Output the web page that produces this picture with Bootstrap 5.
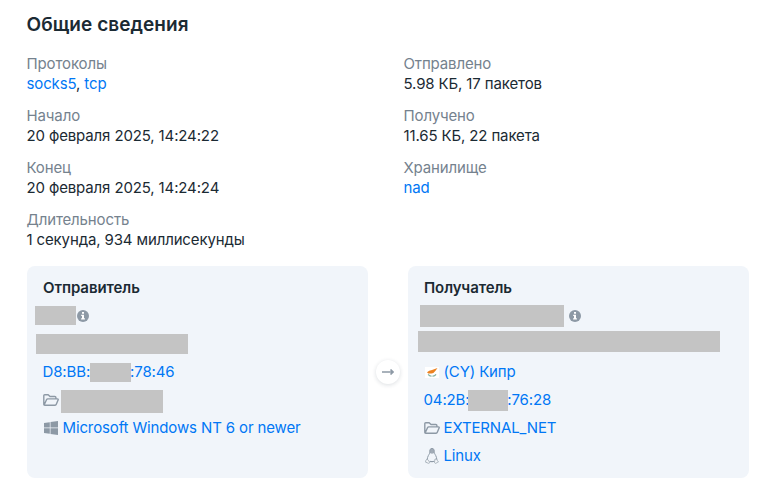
<!DOCTYPE html>
<html lang="ru">
<head>
<meta charset="utf-8">
<meta name="viewport" content="width=device-width, initial-scale=1">
<title>Общие сведения</title>
<link href="https://cdn.jsdelivr.net/npm/bootstrap@5.3.0/dist/css/bootstrap.min.css" rel="stylesheet">
<style>
body{font-family:Inter,"Liberation Sans",sans-serif;font-size:15px;line-height:20px;letter-spacing:-.13px;color:#1b2a33;background:#fff;overflow:hidden}
a{color:#0077f5;text-decoration:none}
.session{padding:13px 14px 0 27px}
.session h1{font-size:19px;line-height:24px;letter-spacing:.06px;margin:0 0 17px -.5px}
.facts{display:grid;grid-template-columns:377px 1fr;margin-bottom:16px}
.facts dl{display:grid;gap:12px;align-content:start;margin-left:-.5px}
.facts dt{color:#75828e}
.facts dt,.facts dd,.line a{font-weight:375}
.endpoint{width:341px;height:212px;background:#f1f5fa;border-radius:8px;padding:12px 16px;gap:8px}
.endpoint h2{font-size:15px;line-height:20px;letter-spacing:-.08px}
.line{height:20px;white-space:nowrap}
.line svg{flex:none}
.line a{margin-left:-.5px}
.mask{background:#c4c4c4;flex:none}
.mask-src-ip{width:41px;height:19px;margin-left:-8px}
.mask-src-host{width:152px;height:20px;margin-left:-7px}
.mask-src-mac{width:41px;height:19px;margin:1px 0 0 -.5px}
.mask-src-group{width:102px;height:23px;margin-left:2px}
.mask-dst-ip{width:144px;height:22px;margin:-1px 0 0 -4px}
.mask-dst-host{width:302px;height:21px;margin:-3px 0 0 -6px}
.mask-dst-mac{width:40px;height:21px;margin:0 -.7px 0 -1px}
.direction{width:24px;height:24px;box-shadow:0 1px 4px rgba(30,50,70,.16)}
.ico{color:#8d99a5}
.ico-info{margin:4px 0 0 1px}
.mask-dst-ip + .ico-info{margin-left:5px}
.ico-folder{margin:2px 0 0}
.ico-folder + a{margin-left:3.5px}
.ico-os{margin:3px 5px 0 1px}
.ico-tux{margin:2px 5px 0 1px}
.ico-flag{margin:5px 5px 0 1px}
</style>
<script src="https://cdn.jsdelivr.net/npm/bootstrap@5.3.0/dist/js/bootstrap.bundle.min.js"></script>
</head>
<body>
<svg class="d-none" aria-hidden="true">
<symbol id="info" viewBox="0 0 12 12"><circle cx="6" cy="6" r="6" fill="currentColor"/><path d="M5 2h2v1.700H5zM4.200 4.800H7v3.500h.9v1.200H4.100V8.300H5V6h-.8z" fill="#fff"/></symbol>
<symbol id="folder" viewBox="0 0 16 16"><path d="M.8 12.200V3.500Q.8 2.700 1.700 2.700h3.500l1.800 1.800h4.800q1.100 0 1.100 1.100v1.200M1.100 13 3.500 7.700q.4-.8 1.200-.8h9.700q1.100 0 .7 1l-1.800 4.400q-.3.900-1.200.9H1.800Q.8 13.200.8 12.200" fill="none" stroke="currentColor" stroke-width="1.400" stroke-linejoin="round"/></symbol>
<symbol id="windows" viewBox="0 0 14 14"><path d="M0 2 5.800 1.200v5.400H0zM6.500 1.100 14 0v6.600H6.500zM0 7.300h5.800v5.500L0 12zM6.500 7.300H14V14l-7.500-1.100z" fill="currentColor"/></symbol>
<symbol id="linux" viewBox="0 0 14 16"><path d="M7 .5C5.300.5 4.700 1.700 4.800 3.200 5 5.200 4.200 6 3.400 7.500 2.700 8.900 2.300 10.200 2.200 11.400M7 .5c1.700 0 2.300 1.200 2.200 2.700-.1 2 .7 2.800 1.500 4.300.6 1.200 1 2.500 1.100 3.900" fill="none" stroke="currentColor" stroke-width="1"/><path d="M4.900 3.200C4.800 1.400 5.600.5 7 .5s2.300 1 2.100 2.800c0 .8.1 1.200.4 1.800L7 5.700 4.600 5z" fill="currentColor" opacity=".8"/><path d="M4.700 13.300q2.300.8 4.600 0" fill="none" stroke="currentColor" stroke-width="1.200"/><path d="M2.200 11 .9 12.200l-.3 2 3 1.100 1.300-.8zM10 11l-.5 3.600 1.200.8 2.800-1.700-1.300-1.100-.2-1.400z" fill="#f6f8fb" stroke="currentColor" stroke-width=".7" stroke-linejoin="round"/></symbol>
</svg>
<main class="session">
<h1 class="fw-semibold">Общие сведения</h1>
<div class="facts">
<dl class="mb-0">
<div><dt>Протоколы</dt><dd class="mb-0"><a href="#">socks5</a>, <a href="#">tcp</a></dd></div>
<div><dt>Начало</dt><dd class="mb-0">20 февраля 2025, 14:24:22</dd></div>
<div><dt>Конец</dt><dd class="mb-0">20 февраля 2025, 14:24:24</dd></div>
<div><dt>Длительность</dt><dd class="mb-0">1 секунда, 934 миллисекунды</dd></div>
</dl>
<dl class="mb-0">
<div><dt>Отправлено</dt><dd class="mb-0">5.98 КБ, 17 пакетов</dd></div>
<div><dt>Получено</dt><dd class="mb-0">11.65 КБ, 22 пакета</dd></div>
<div><dt>Хранилище</dt><dd class="mb-0"><a href="#">nad</a></dd></div>
</dl>
</div>
<div class="d-flex align-items-center justify-content-between">
<section class="endpoint d-flex flex-column">
<h2 class="fw-semibold mb-0">Отправитель</h2>
<div class="line d-flex"><span class="mask mask-src-ip"></span><svg class="ico ico-info" width="12" height="12"><use href="#info"/></svg></div>
<div class="line d-flex"><span class="mask mask-src-host"></span></div>
<div class="line d-flex"><a href="#">D8:BB:</a><span class="mask mask-src-mac"></span><a href="#">:78:46</a></div>
<div class="line d-flex"><svg class="ico ico-folder" width="16" height="16"><use href="#folder"/></svg><span class="mask mask-src-group"></span></div>
<div class="line d-flex"><svg class="ico ico-os" width="14" height="14"><use href="#windows"/></svg><a href="#">Microsoft Windows NT 6 or newer</a></div>
</section>
<div class="direction rounded-circle bg-white d-flex align-items-center justify-content-center ico"><svg width="12" height="8" viewBox="0 0 12 8"><path d="M0 4h11M8.500 1.500 11 4 8.500 6.500" fill="none" stroke="currentColor" stroke-width="1.700"/></svg></div>
<section class="endpoint d-flex flex-column">
<h2 class="fw-semibold mb-0">Получатель</h2>
<div class="line d-flex"><span class="mask mask-dst-ip"></span><svg class="ico ico-info" width="12" height="12"><use href="#info"/></svg></div>
<div class="line d-flex"><span class="mask mask-dst-host"></span></div>
<div class="line d-flex"><svg class="ico-flag" width="14" height="11" viewBox="0 0 14 11"><path d="M0 0h14v11H0z" fill="#fff"/><path d="M2 5.200Q4 3.200 7 3L12.500.9 10.500 3.800Q8.800 6.500 6.500 6.500L3.300 6.500z" fill="#ec8220"/><path d="M3.200 7.300Q4.500 9.200 6.500 9.100M11 7.300Q9.700 9.200 7.500 9.100" fill="none" stroke="#7dad9c" stroke-width="1.300"/></svg><a href="#">(CY) Кипр</a></div>
<div class="line d-flex"><a href="#">04:2B:</a><span class="mask mask-dst-mac"></span><a href="#">:76:28</a></div>
<div class="line d-flex"><svg class="ico ico-folder" width="16" height="16"><use href="#folder"/></svg><a href="#">EXTERNAL_NET</a></div>
<div class="line d-flex"><svg class="ico ico-tux" width="14" height="16"><use href="#linux"/></svg><a href="#">Linux</a></div>
</section>
</div>
</main>
</body>
</html>
